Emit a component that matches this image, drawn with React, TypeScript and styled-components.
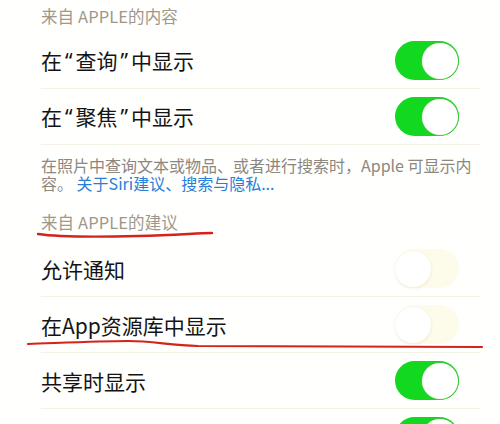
import React from 'react';
import styled, { createGlobalStyle } from 'styled-components';

const GlobalStyle = createGlobalStyle`
  html, body {
    margin: 0;
    padding: 0;
    background: #fffffd;
  }
  body {
    font-family: "Noto Sans CJK SC", "Noto Sans", "Liberation Sans", sans-serif;
    overflow: hidden;
  }
`;

const Screen = styled.div`
  width: 500px;
  height: 424px;
  overflow: hidden;
  background: #fffffd;
`;

const SectionHeader = styled.div<{ $height: number; $pad: number }>`
  position: relative;
  height: ${(p) => p.$height}px;
  padding-bottom: ${(p) => p.$pad}px;
  box-sizing: border-box;
  margin-left: 41px;
  display: flex;
  align-items: flex-end;
  font-size: 16.5px;
  line-height: 20px;
  color: #9e978b;
  letter-spacing: 0.1px;
`;

const Row = styled.div`
  position: relative;
  height: 56px;
  margin-left: 41px;
  width: 439px;
  padding-right: 21px;
  box-sizing: border-box;
  display: flex;
  align-items: center;
  justify-content: space-between;
  border-bottom: 1px solid #f4f2e4;
`;

const Label = styled.span`
  font-size: 21px;
  color: #141414;
  line-height: 28px;
`;

/* proportional quotes instead of the full-width CJK ones */
const Quote = styled.span`
  font-family: "Noto Sans", "Liberation Sans", sans-serif;
  margin: 0 3px;
`;

const Track = styled.div<{ $on: boolean }>`
  position: relative;
  width: 64px;
  height: 39px;
  border-radius: 20px;
  background: ${(p) => (p.$on ? '#12d91f' : '#fdfbe9')};
  flex-shrink: 0;
  margin-left: auto;
`;

const Knob = styled.div<{ $on: boolean }>`
  position: absolute;
  top: 1.5px;
  left: ${(p) => (p.$on ? '26.5px' : '0px')};
  width: 36px;
  height: 36px;
  border-radius: 50%;
  background: #ffffff;
  box-shadow: ${(p) =>
    p.$on ? '0 0 0 1px #3fc93a' : '0 1px 3px rgba(205, 195, 150, 0.35)'};
`;

const Footer = styled.div`
  margin-left: 41px;
  width: 436px;
  padding-top: 11px;
  font-size: 16px;
  line-height: 18px;
  color: #8c877f;
`;

const Link = styled.span`
  color: #2a7ed6;
`;

const Scribble = styled.svg<{ $left: number; $top: number }>`
  position: absolute;
  left: ${(p) => p.$left}px;
  top: ${(p) => p.$top}px;
  overflow: visible;
  pointer-events: none;
`;

function Toggle({ on }: { on: boolean }) {
  return (
    <Track $on={on}>
      <Knob $on={on} />
    </Track>
  );
}

export default function App() {
  return (
    <Screen>
      <GlobalStyle />
      <SectionHeader $height={33} $pad={7}>来自 APPLE的内容</SectionHeader>
      <Row>
        <Label>
          在<Quote>“</Quote>查询<Quote>”</Quote>中显示
        </Label>
        <Toggle on />
      </Row>
      <Row>
        <Label>
          在<Quote>“</Quote>聚焦<Quote>”</Quote>中显示
        </Label>
        <Toggle on />
      </Row>
      <Footer>
        在照片中查询文本或物品、或者进行搜索时，Apple 可显示内容。 <Link>关于Siri建议、搜索与隐私...</Link>
      </Footer>
      <SectionHeader $height={49} $pad={9}>
        来自 APPLE的建议
        <Scribble $left={-3} $top={38} width="180" height="8">
          <path
            d="M0 4 C 20 7, 60 7, 100 6 S 160 3, 174 3"
            fill="none"
            stroke="#d3231b"
            strokeWidth="2.4"
            strokeLinecap="round"
          />
        </Scribble>
      </SectionHeader>
      <Row>
        <Label>允许通知</Label>
        <Toggle on={false} />
      </Row>
      <Row>
        <Label>在App资源库中显示</Label>
        <Toggle on={false} />
        <Scribble $left={-13} $top={42} width="456" height="10">
          <path
            d="M0 5 C 30 4, 70 2, 100 2 C 125 2, 140 6, 170 7 C 220 8, 330 8, 454 8"
            fill="none"
            stroke="#d3231b"
            strokeWidth="2.2"
            strokeLinecap="round"
          />
        </Scribble>
      </Row>
      <Row>
        <Label>共享时显示</Label>
        <Toggle on />
      </Row>
      <Row>
        <Toggle on />
      </Row>
    </Screen>
  );
}
